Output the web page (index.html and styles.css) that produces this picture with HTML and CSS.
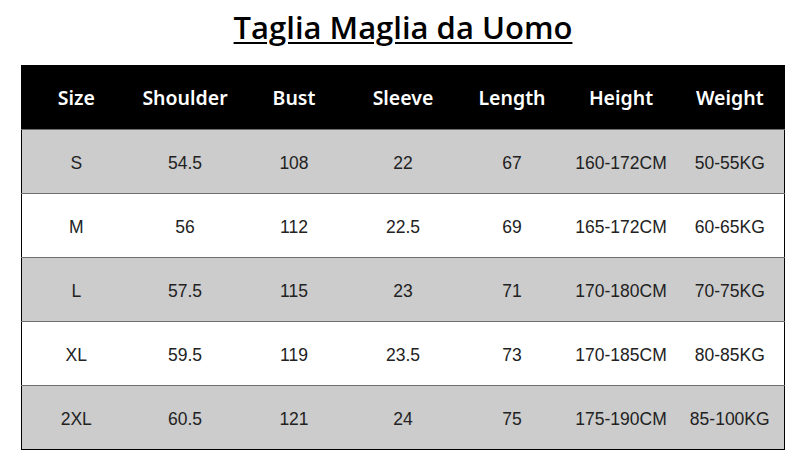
FILE: index.html
```html
<!DOCTYPE html>
<html>
<head>
<meta charset="utf-8">
<link rel="stylesheet" href="styles.css">
</head>
<body>
<h1 class="title">Taglia Maglia da Uomo</h1>
<table class="size-table">
<thead>
<tr><th>Size</th><th>Shoulder</th><th>Bust</th><th>Sleeve</th><th>Length</th><th>Height</th><th>Weight</th></tr>
</thead>
<tbody>
<tr class="gray"><td>S</td><td>54.5</td><td>108</td><td>22</td><td>67</td><td>160-172CM</td><td>50-55KG</td></tr>
<tr><td>M</td><td>56</td><td>112</td><td>22.5</td><td>69</td><td>165-172CM</td><td>60-65KG</td></tr>
<tr class="gray"><td>L</td><td>57.5</td><td>115</td><td>23</td><td>71</td><td>170-180CM</td><td>70-75KG</td></tr>
<tr><td>XL</td><td>59.5</td><td>119</td><td>23.5</td><td>73</td><td>170-185CM</td><td>80-85KG</td></tr>
<tr class="gray"><td>2XL</td><td>60.5</td><td>121</td><td>24</td><td>75</td><td>175-190CM</td><td>85-100KG</td></tr>
</tbody>
</table>
</body>
</html>
```
FILE: styles.css
```css
html, body { margin: 0; padding: 0; background: #fff; }
body { font-family: "Liberation Sans", Arial, sans-serif; }
.title {
  margin: 0;
  height: 65px;
  padding-top: 10px;
  box-sizing: border-box;
  text-align: center;
  font-family: "Open Sans", "Noto Sans", sans-serif;
  font-weight: 600;
  font-size: 31px;
  line-height: 34px;
  text-decoration: underline;
  text-decoration-thickness: 2px;
  text-underline-offset: 3px;
  color: #000;
}
.size-table {
  margin-left: 21px;
  width: 764px;
  border-collapse: collapse;
  table-layout: fixed;
  border: 1px solid #000;
}
.size-table th {
  background: #000;
  color: #fff;
  height: 63px;
  font-family: "Noto Sans", "Open Sans", sans-serif;
  font-weight: 600;
  font-size: 19.5px;
  padding: 0;
  text-align: center;
}
.size-table td {
  height: 60px;
  padding: 3px 0 0;
  text-align: center;
  font-size: 17.5px;
  color: #222;
  border-top: 1px solid #6e6e6e;
}
.size-table tr.gray td { background: #cccccc; }
```
